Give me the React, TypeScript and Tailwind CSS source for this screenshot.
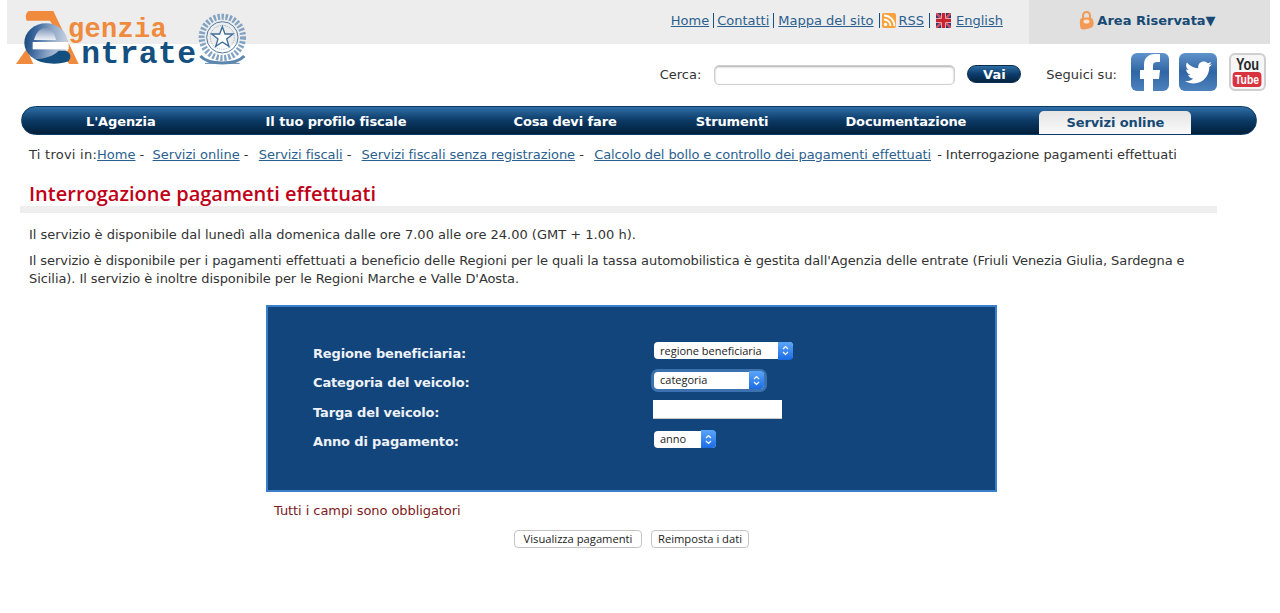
import React from "react";
import { FaTwitter } from "react-icons/fa";

const verdana = { fontFamily: '"DejaVu Sans", Verdana, sans-serif' };
const lucida = { fontFamily: '"Open Sans", "Noto Sans", sans-serif' };

function Logo() {
  return (
    <svg className="absolute left-0 top-0" width="250" height="80" viewBox="0 0 750 240">
      <defs>
        <linearGradient id="eg" x1="0" y1="0" x2="1" y2="0.15">
          <stop offset="0" stopColor="#0f4479" />
          <stop offset="0.3" stopColor="#3f6a9f" />
          <stop offset="0.65" stopColor="#8ea6c6" />
          <stop offset="1" stopColor="#c2cede" />
        </linearGradient>
        <linearGradient id="dome" x1="0" y1="0" x2="0" y2="1">
          <stop offset="0" stopColor="#7d95b8" />
          <stop offset="1" stopColor="#eef1f6" />
        </linearGradient>
      </defs>
      <path d="M86 33H160L236 192H208L176 152H205L150 62H80C76 50 76 40 86 33Z" fill="#f08a3c" />
      <path d="M48 192L80 146L100 192Z" fill="#f08a3c" />
      <ellipse cx="138" cy="128" rx="65" ry="58" fill="url(#eg)" />
      <path d="M102 120C108 96 122 84 136 84C152 84 164 98 168 120Z" fill="url(#dome)" />
      <rect x="98" y="126" width="108" height="22" fill="#fff" />
      <path d="M106 178C130 176 160 170 176 152H196C212 156 216 172 205 184C180 194 130 194 106 178Z" fill="#14507f" />
      <text x="204" y="112" fontFamily="'Liberation Mono', monospace" fontSize="81" fontWeight="700" fill="#f08a3c" textLength="296">genzia</text>
      <text x="244" y="190" fontFamily="'Liberation Mono', monospace" fontSize="94" fontWeight="700" fill="#14507f" textLength="344">ntrate</text>
      <g transform="translate(667 112)" fill="none" stroke="#6f94b8">
        <circle r="62" strokeWidth="18" strokeDasharray="7 5" opacity="0.85" />
        <circle r="47" strokeWidth="3" stroke="#4f7aa3" />
        <circle r="36" strokeWidth="2" strokeDasharray="4 3" stroke="#6f94b8" />
        <path d="M0 -32L8 -10H32L13 5L20 27L0 14L-20 27L-13 5L-32 -10H-8Z" strokeWidth="4" stroke="#3f6e99" fill="#fff" />
        <path d="M-66 56C-40 84 40 84 66 56" strokeWidth="9" stroke="#5d86ad" />
        <path d="M-52 78H52" strokeWidth="3" stroke="#5d86ad" />
      </g>
    </svg>
  );
}

function Sep({ className = "mx-[4px]" }: { className?: string }) {
  return <span className={`h-[15px] w-px bg-[#174f80] ${className}`} />;
}

function TopLink({ children }: { children: React.ReactNode }) {
  return <a className="text-[13px] text-[#2b5f8f] underline">{children}</a>;
}

function FakeSelect({ label, width, focus }: { label: string; width: string; focus?: boolean }) {
  return (
    <div className={`ml-px flex h-[17px] items-center justify-between rounded-[4px] bg-white pl-[6px] ${width} ${focus ? "shadow-[0_0_0_3px_#3c72b0]" : ""}`}>
      <span className="text-[11px] text-[#222]" style={lucida}>{label}</span>
      <span className="flex h-[18px] w-[15px] items-center justify-center rounded-r-[4px] bg-gradient-to-b from-[#5aa5fb] to-[#1a6be4]">
        <svg width="7" height="11" viewBox="0 0 7 11" fill="none" stroke="#fff" strokeWidth="1.2">
          <path d="M1 4L3.500 1.500L6 4M1 7L3.500 9.500L6 7" />
        </svg>
      </span>
    </div>
  );
}

function FormRow({ label, children }: { label: string; children: React.ReactNode }) {
  return (
    <div className="flex h-[29.5px] items-center">
      <span className="w-[340px] pt-[5px] text-[13px] font-bold tracking-[-0.15px] text-[#eef2f7]">{label}</span>
      {children}
    </div>
  );
}

function Crumb({ children, className = "" }: { children: React.ReactNode; className?: string }) {
  return <a className={`text-[#2b5f8f] underline ${className}`}>{children}</a>;
}

export default function App() {
  return (
    <div className="relative h-[613px] w-[1280px] overflow-hidden bg-white text-[#333]" style={verdana}>
      <div className="ml-[7px] mr-[10px] flex h-[44px] justify-end bg-[#ededed]">
        <div className="flex items-center pb-[3px] pr-[26px]">
          <TopLink>Home</TopLink>
          <Sep className="ml-[4px] mr-[3px]" />
          <TopLink>Contatti</TopLink>
          <Sep />
          <TopLink>Mappa del sito</TopLink>
          <Sep className="ml-[5px] mr-[2px]" />
          <svg width="14" height="15" viewBox="0 0 14 15" className="mr-[3px]">
            <rect width="14" height="15" rx="2" fill="#f7a13f" />
            <circle cx="3.500" cy="11.500" r="1.700" fill="#fff" />
            <path d="M2 6.500A6.500 6.500 0 0 1 8.500 13M2 2.500A10.500 10.500 0 0 1 12.500 13" fill="none" stroke="#fff" strokeWidth="1.800" />
          </svg>
          <TopLink>RSS</TopLink>
          <Sep className="ml-[5px] mr-[4px]" />
          <svg width="15" height="15" viewBox="0 0 15 15" className="ml-[2px] mr-[5px]">
            <rect width="15" height="15" rx="1" fill="#2b3a78" />
            <path d="M0 0L15 15M15 0L0 15" stroke="#d6505c" strokeWidth="2.500" />
            <path d="M7.500 0V15M0 7.500H15" stroke="#f3d5d8" strokeWidth="5" />
            <path d="M7.500 0V15M0 7.500H15" stroke="#c8232f" strokeWidth="3.500" />
          </svg>
          <TopLink>English</TopLink>
        </div>
        <div className="flex w-[241px] items-center justify-center gap-[3px] bg-[#e0e0e0] pb-[3px] pr-[4px]">
          <svg width="15" height="20" viewBox="0 0 15 20">
            <path d="M4 7V4.500a3.500 3.500 0 0 1 7 0V7" fill="none" stroke="#ee9a56" strokeWidth="2" />
            <path d="M1.500 7.500C4 6 11 6 13.500 7.500C15 11 15 14 13.500 16C10 18 4 19 2 18C0.500 15 0.500 11 1.500 7.500Z" fill="#f29a55" />
            <ellipse cx="7.500" cy="10.500" rx="3" ry="2" fill="#fde2cd" />
          </svg>
          <span className="text-[13px] font-bold text-[#174a75]">Area Riservata▼</span>
        </div>
      </div>

      <div className="flex h-[62px] items-center justify-end pr-[14px]">
        <span className="mr-[13px] text-[13px] text-[#333]">Cerca:</span>
        <div className="mr-[12px] h-[20px] w-[241px] rounded-[5px] border border-[#cfcfcf] bg-white shadow-[inset_0_1px_2px_#aaa]" />
        <button className="mb-[2px] mr-[25px] h-[18px] w-[54px] rounded-full border border-[#0b2c4d] bg-gradient-to-b from-[#2e6ea5] via-[#0d3d6c] to-[#042442] text-[13px] font-bold leading-none text-white">
          Vai
        </button>
        <span className="mr-[14px] text-[13px] text-[#333]">Seguici su:</span>
        <div className="mt-[9px] flex self-start">
          <div className="mr-[10px] h-[38px] w-[38px] overflow-hidden rounded-[6px] bg-gradient-to-b from-[#5f93cc] via-[#2f66a3] to-[#4d82bd]">
            <svg width="38" height="38" viewBox="0 0 38 38" fill="#fff">
              <path d="M13 38V26H9V17H13V12C13 5 17 1 24 1H29V9H26C23.500 9 22 10 22 12.500V17H29L28 26H22V38Z" />
            </svg>
          </div>
          <div className="mr-[12px] flex h-[38px] w-[38px] items-center justify-center rounded-[6px] bg-gradient-to-b from-[#5f93cc] via-[#2f66a3] to-[#4d82bd]">
            <FaTwitter size={27} color="#fff" />
          </div>
          <div className="flex h-[38px] w-[37px] flex-col items-center justify-center rounded-[6px] border-2 border-[#cfcfcf] bg-[#f6f6f6]" style={{ fontFamily: '"Liberation Sans", sans-serif' }}>
            <span className="scale-x-[0.8] text-[16px] font-bold leading-[15px] text-[#2a2a2a]">You</span>
            <span className="scale-x-[0.8] rounded-[4px] bg-[#d9333f] px-[3px] text-[13px] font-bold leading-[15px] text-white">Tube</span>
          </div>
        </div>
      </div>

      <nav className="ml-[21px] flex h-[29px] w-[1236px] items-end rounded-full border border-[#0c3a63] bg-gradient-to-b from-[#2f6fa8] via-[#0b3a66] to-[#031f3a] text-[13px] font-bold tracking-[-0.1px] text-white">
        <div className="flex h-[27px] w-full items-center pt-[3px]">
          <span className="ml-[64px]">L'Agenzia</span>
          <span className="ml-[110px]">Il tuo profilo fiscale</span>
          <span className="ml-[107px]">Cosa devi fare</span>
          <span className="ml-[79px]">Strumenti</span>
          <span className="ml-[77px]">Documentazione</span>
          <span className="ml-[73px] flex h-[23px] w-[152px] items-center justify-center self-end rounded-t-[5px] bg-gradient-to-b from-[#e4e4e4] to-[#fafafa] text-[#174a75]">
            Servizi online
          </span>
        </div>
      </nav>

      <div className="ml-[29px] mt-[11px] flex h-[16px] items-center whitespace-pre text-[13px] leading-none text-[#333]">
        <span className="tracking-[0.25px]">Ti trovi in:</span>
        <Crumb>Home</Crumb> -  <Crumb>Servizi online</Crumb> -  <Crumb className="ml-[2px] tracking-[-0.07px]">Servizi fiscali</Crumb> -  <Crumb className="ml-[2px] tracking-[-0.06px]">Servizi fiscali senza registrazione</Crumb> -  <Crumb className="ml-[2px] tracking-[-0.1px]">Calcolo del bollo e controllo dei pagamenti effettuati</Crumb>
        <span className="ml-[2px] tracking-[-0.05px]"> - Interrogazione pagamenti effettuati</span>
      </div>

      <div className="ml-[20px] mt-[20px] w-[1197px] border-b-[7px] border-[#eeeeee] pl-[9px]">
        <h1 className="text-[20px] font-semibold leading-[24px] text-[#c00017]" style={{ fontFamily: '"Open Sans", sans-serif' }}>
          Interrogazione pagamenti effettuati
        </h1>
      </div>

      <div className="ml-[29px] mt-[13px] w-[1170px] text-[13px] leading-[18px] text-[#333]">
        <p>Il servizio è disponibile dal lunedì alla domenica dalle ore 7.00 alle ore 24.00 (GMT + 1.00 h).</p>
        <p className="mt-[8px] tracking-[-0.07px]">
          Il servizio è disponibile per i pagamenti effettuati a beneficio delle Regioni per le quali la tassa automobilistica è gestita dall'Agenzia delle entrate (Friuli Venezia Giulia, Sardegna e Sicilia). Il servizio è inoltre disponibile per le Regioni Marche e Valle D'Aosta.
        </p>
      </div>

      <div className="ml-[266px] mt-[17px] h-[187px] w-[731px] border-2 border-[#3b7fca] bg-[#12457c] pl-[45px] pt-[29px]">
        <FormRow label="Regione beneficiaria:"><FakeSelect label="regione beneficiaria" width="w-[139px]" /></FormRow>
        <FormRow label="Categoria del veicolo:"><FakeSelect label="categoria" width="w-[110px]" focus /></FormRow>
        <FormRow label="Targa del veicolo:"><div className="h-[19px] w-[129px] border-b border-[#c8c8c8] bg-white" /></FormRow>
        <FormRow label="Anno di pagamento:"><FakeSelect label="anno" width="w-[62px]" /></FormRow>
      </div>

      <p className="ml-[274px] mt-[11px] text-[13px] leading-[16px] tracking-[-0.07px] text-[#7d1a20]">Tutti i campi sono obbligatori</p>

      <div className="ml-[514px] mt-[11px] flex gap-[9px]">
        <button className="h-[18px] w-[128px] rounded-[4px] border border-[#c4c4c4] bg-white text-[11.2px] leading-none text-[#222]" style={lucida}>Visualizza pagamenti</button>
        <button className="h-[18px] w-[98px] rounded-[4px] border border-[#c4c4c4] bg-white text-[11.2px] leading-none text-[#222]" style={lucida}>Reimposta i dati</button>
      </div>

      <Logo />
    </div>
  );
}
